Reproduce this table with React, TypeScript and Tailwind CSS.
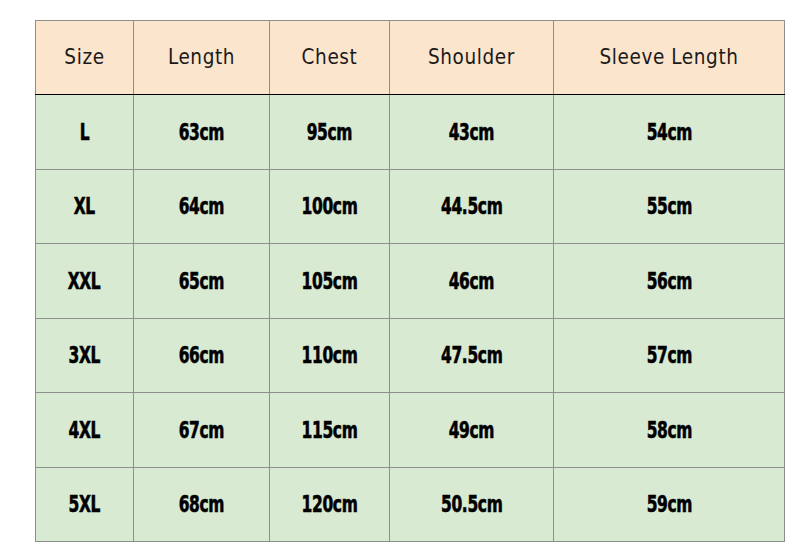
import React from "react";

const headers = ["Size", "Length", "Chest", "Shoulder", "Sleeve Length"];
const widths = ["w-[98px]", "w-[136px]", "w-[120px]", "w-[164px]", "w-[231px]"];
const rows = [
  ["L", "63cm", "95cm", "43cm", "54cm"],
  ["XL", "64cm", "100cm", "44.5cm", "55cm"],
  ["XXL", "65cm", "105cm", "46cm", "56cm"],
  ["3XL", "66cm", "110cm", "47.5cm", "57cm"],
  ["4XL", "67cm", "115cm", "49cm", "58cm"],
  ["5XL", "68cm", "120cm", "50.5cm", "59cm"],
];

export default function App() {
  return (
    <div className="w-[805px] h-[560px] bg-white pl-[35px] pt-[20px]">
      <table className="border-collapse table-fixed w-[750px]">
        <thead>
          <tr className="h-[74px] bg-[#fce5cd]">
            {headers.map((h, i) => (
              <th
                key={h}
                className={`${widths[i]} border border-[#8e8e8e] border-b-black text-center font-normal text-[20.5px] text-[#1a1a1a] tracking-[0.6px] [font-family:'DejaVu_Sans_Condensed','DejaVu_Sans',sans-serif]`}
              >
                {h}
              </th>
            ))}
          </tr>
        </thead>
        <tbody>
          {rows.map((r, ri) => (
            <tr key={ri} className="h-[74.5px] bg-[#d9ead3]">
              {r.map((c, ci) => (
                <td
                  key={ci}
                  className={`${widths[ci]} border border-[#8e8e8e] ${ri === 0 ? "border-t-black" : ""} text-center text-black`}
                >
                  <span className="inline-block scale-x-[0.86] scale-y-[1.12] font-bold text-[20px] tracking-[-0.4px] [-webkit-text-stroke:0.5px_black] [font-family:'DejaVu_Sans_Condensed',sans-serif]">
                    {c}
                  </span>
                </td>
              ))}
            </tr>
          ))}
        </tbody>
      </table>
    </div>
  );
}
